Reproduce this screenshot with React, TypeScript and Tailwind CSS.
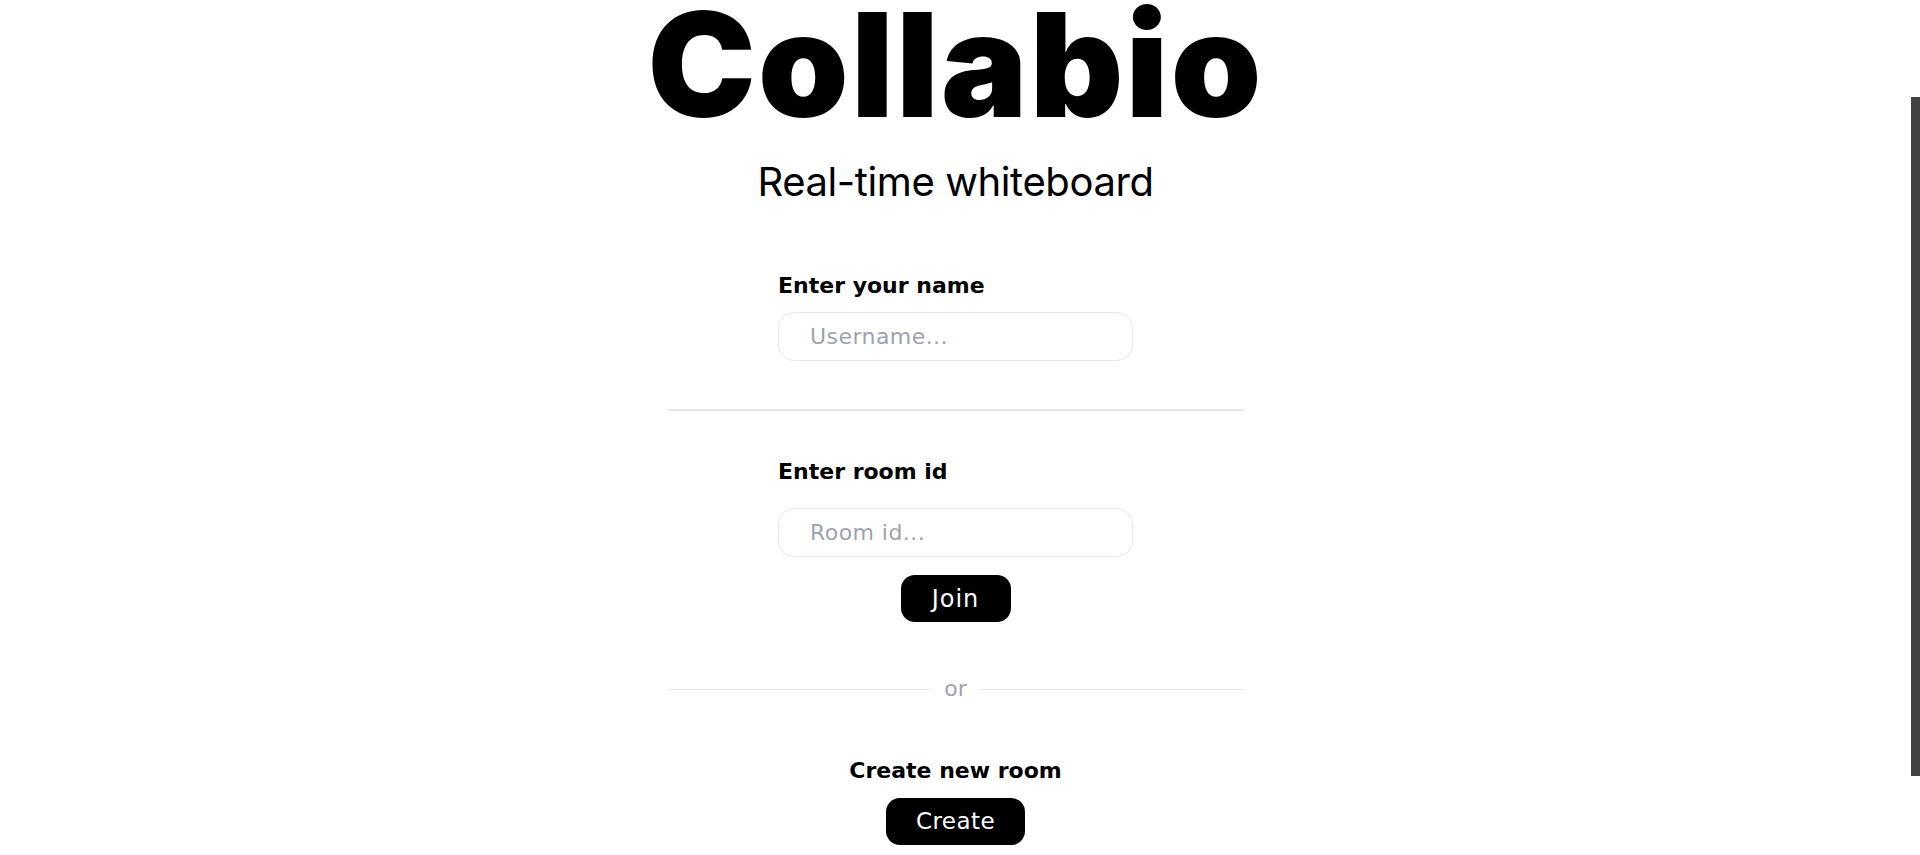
import { useEffect, useRef, useState } from 'react';

const BODY = "font-['DejaVu_Sans','Liberation_Sans',sans-serif]";

export default function App() {
  const scroller = useRef<HTMLDivElement>(null);
  const [name, setName] = useState('');
  const [roomId, setRoomId] = useState('');

  useEffect(() => {
    if (scroller.current) scroller.current.scrollTop = 122;
  }, []);

  return (
    <div className="h-screen flex bg-white text-black">
      <div ref={scroller} className="flex-1 h-full overflow-y-scroll [scrollbar-width:none]">
        <div className="flex flex-col items-center pt-[114px] pb-[110px]">
          <h1 className="font-['Inter',sans-serif] text-[145px] font-black leading-none tracking-[0.015em]">Collabio</h1>
          <p className="mt-[25px] font-['Inter',sans-serif] text-[40px] leading-none tracking-[-0.01em]">Real-time whiteboard</p>

          <div className={`w-[577px] flex flex-col items-center mt-[73px] ${BODY}`}>
            {/* name */}
            <div className="w-[355px] flex flex-col">
              <label className="text-[22px] font-bold leading-none">Enter your name</label>
              <input
                value={name}
                onChange={(e) => setName(e.target.value)}
                placeholder="Username..."
                className="mt-[15px] h-[49px] w-full rounded-[16px] border border-[#e5e7eb] px-[31px] text-[22px] tracking-[0.02em] placeholder:text-[#9ca3af] focus:outline-none"
              />
            </div>

            <div className="w-full h-[2px] bg-[#e5e7eb] mt-[48px]" />

            {/* join room */}
            <div className="w-[355px] flex flex-col mt-[50px]">
              <label className="text-[22px] font-bold leading-none">Enter room id</label>
              <input
                value={roomId}
                onChange={(e) => setRoomId(e.target.value)}
                placeholder="Room id..."
                className="mt-[25px] h-[49px] w-full rounded-[16px] border border-[#e5e7eb] px-[31px] text-[22px] tracking-[0.02em] placeholder:text-[#9ca3af] focus:outline-none"
              />
            </div>
            <button className="mt-[18px] h-[47px] w-[110px] rounded-[14px] bg-black text-white text-[24px] leading-none tracking-[0.04em]">
              Join
            </button>

            <div className="w-full flex items-center gap-[13px] mt-[56px]">
              <div className="flex-1 h-px bg-[#e5e7eb]" />
              <span className="text-[22px] leading-none text-[#9ca3af]">or</span>
              <div className="flex-1 h-px bg-[#e5e7eb]" />
            </div>

            <p className="mt-[60px] text-[22px] font-bold leading-none">Create new room</p>
            <button className="mt-[16px] h-[47px] w-[139px] rounded-[14px] bg-black text-white text-[23px] leading-none tracking-[0.02em]">
              Create
            </button>
          </div>
        </div>
      </div>

      {/* scrollbar rail */}
      <div className="w-[9px] h-full flex flex-col">
        <div className="h-[97px]" />
        <div className="h-[679px] bg-[#424242]" />
      </div>
    </div>
  );
}
